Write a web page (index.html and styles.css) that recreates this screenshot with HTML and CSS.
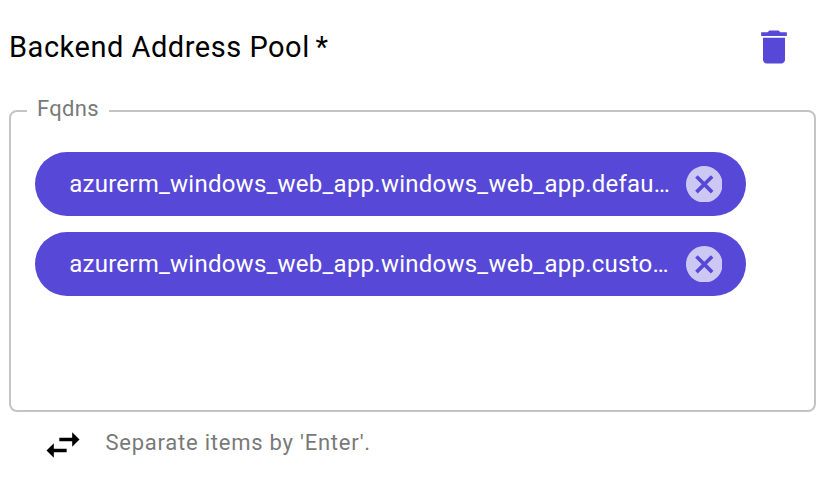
FILE: index.html
```html
<!DOCTYPE html>
<html lang="en">
<head>
<meta charset="utf-8">
<title>Backend Address Pool</title>
<link rel="stylesheet" href="styles.css">
</head>
<body>
<header class="header">
  <h1 class="title">Backend Address Pool<span class="required"> *</span></h1>
  <button class="icon-button" aria-label="Delete"><svg viewBox="0 0 24 24" width="44" height="44"><path d="M6 19c0 1.100.9 2 2 2h8c1.100 0 2-.9 2-2V7H6v12zM19 4h-3.500l-1-1h-5l-1 1H5v2h14V4z"/></svg></button>
</header>
<fieldset class="field">
  <legend class="legend">Fqdns</legend>
  <div class="chips">
    <div class="chip"><span class="label">azurerm_windows_web_app.windows_web_app.defau…</span><svg class="cancel" viewBox="2 2 20 20"><path d="M12 2C6.470 2 2 6.470 2 12s4.470 10 10 10 10-4.470 10-10S17.530 2 12 2zm5 13.590L15.590 17 12 13.410 8.410 17 7 15.590 10.590 12 7 8.410 8.410 7 12 10.590 15.590 7 17 8.410 13.410 12 17 15.590z"/></svg></div>
    <div class="chip"><span class="label">azurerm_windows_web_app.windows_web_app.custo…</span><svg class="cancel" viewBox="2 2 20 20"><path d="M12 2C6.470 2 2 6.470 2 12s4.470 10 10 10 10-4.470 10-10S17.530 2 12 2zm5 13.590L15.590 17 12 13.410 8.410 17 7 15.590 10.590 12 7 8.410 8.410 7 12 10.590 15.590 7 17 8.410 13.410 12 17 15.590z"/></svg></div>
  </div>
</fieldset>
<footer class="footer">
  <svg class="swap" viewBox="0 0 24 24"><path d="M6.990 11L3 15l3.990 4v-3H14v-2H6.990v-3zM21 9l-3.990-4v3H10v2h7.010v3L21 9z"/></svg>
  <span class="hint">Separate items by 'Enter'.</span>
</footer>
</body>
</html>
```

FILE: styles.css
```css
* { box-sizing: border-box; }
body { margin: 0; padding: 0 14px 0 9px; background: #fff; font-family: Roboto, sans-serif; }
.header { display: flex; justify-content: space-between; align-items: center; height: 96px; padding: 0 20px 2px 0; }
.title { margin: 0; font-size: 29px; font-weight: 400; letter-spacing: .52px; color: #000; }
.required { margin-left: -2px; }
.icon-button { display: flex; padding: 0; border: 0; background: none; fill: #5748d8; }
.field { height: 316px; margin: 0; padding: 0 24px; border: 2px solid #c4c4c4; border-radius: 8px; }
.legend { margin-left: -8px; padding: 0 10px 4px; height: 30px; line-height: 26px; font-size: 22px; letter-spacing: .3px; color: #797979; }
.chips { display: flex; flex-direction: column; gap: 16px; padding-top: 26px; }
.chip { display: flex; align-items: center; justify-content: space-between; width: 711px; height: 64px; padding: 0 23.700px 0 34.300px; border-radius: 32px; background: #5748d8; color: #fff; }
.label { font-size: 24px; letter-spacing: .24px; white-space: nowrap; }
.cancel { flex: none; width: 36.600px; height: 36.600px; fill: rgba(255,255,255,.7); }
.footer { display: flex; align-items: center; padding: 10.500px 0 0 32px; }
.swap { width: 44px; height: 44px; }
.hint { margin: 0 0 5px 20.400px; font-size: 22px; letter-spacing: .77px; color: #797979; }
```
